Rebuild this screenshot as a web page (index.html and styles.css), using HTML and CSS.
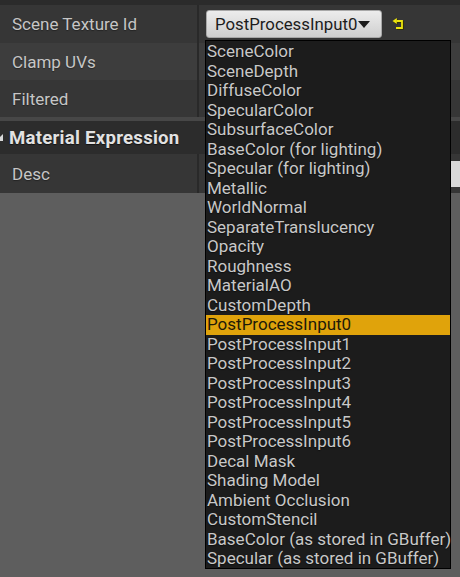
FILE: index.html
```html
<!DOCTYPE html>
<html>
<head>
<meta charset="utf-8">
<link rel="stylesheet" href="styles.css">
</head>
<body>
<div class="panel">
  <div class="topstrip"></div>
  <div class="row row-a">
    <div class="name">Scene Texture Id</div>
    <div class="value">
      <div class="combo">PostProcessInput0<span class="caret"></span></div>
      <svg class="reset" width="13" height="13" viewBox="0 0 13 13">
        <g transform="translate(0.8,0.8)" fill="none" stroke="#2f2f00" stroke-width="2">
          <path d="M4.5 3 H10 V10 H4"/>
        </g>
        <path d="M0.5 3 L4.8 0 V6 Z" fill="#2f2f00" transform="translate(0.8,0.8)"/>
        <path d="M4.5 3 H10 V10 H4" fill="none" stroke="#ece40e" stroke-width="1.8"/>
        <path d="M0.5 3 L4.8 0 V6 Z" fill="#ece40e"/>
      </svg>
    </div>
  </div>
  <div class="row row-b">
    <div class="name">Clamp UVs</div>
    <div class="value"></div>
  </div>
  <div class="row row-c">
    <div class="name">Filtered</div>
    <div class="value"></div>
  </div>
  <div class="sep"></div>
  <div class="header"><span class="arrow"></span>Material Expression</div>
  <div class="row row-d">
    <div class="name">Desc</div>
    <div class="value"><div class="textbox"></div></div>
  </div>
</div>
<div class="menu">
  <div class="item">SceneColor</div>
  <div class="item">SceneDepth</div>
  <div class="item">DiffuseColor</div>
  <div class="item">SpecularColor</div>
  <div class="item">SubsurfaceColor</div>
  <div class="item">BaseColor (for lighting)</div>
  <div class="item">Specular (for lighting)</div>
  <div class="item">Metallic</div>
  <div class="item">WorldNormal</div>
  <div class="item">SeparateTranslucency</div>
  <div class="item">Opacity</div>
  <div class="item">Roughness</div>
  <div class="item">MaterialAO</div>
  <div class="item">CustomDepth</div>
  <div class="item selected">PostProcessInput0</div>
  <div class="item">PostProcessInput1</div>
  <div class="item">PostProcessInput2</div>
  <div class="item">PostProcessInput3</div>
  <div class="item">PostProcessInput4</div>
  <div class="item">PostProcessInput5</div>
  <div class="item">PostProcessInput6</div>
  <div class="item">Decal Mask</div>
  <div class="item">Shading Model</div>
  <div class="item">Ambient Occlusion</div>
  <div class="item">CustomStencil</div>
  <div class="item">BaseColor (as stored in GBuffer)</div>
  <div class="item">Specular (as stored in GBuffer)</div>
</div>
</body>
</html>
```

FILE: styles.css
```css
html, body {
  margin: 0;
  padding: 0;
}
body {
  background: #5e5e5e;
  width: 460px;
  height: 577px;
  overflow: hidden;
  font-family: Roboto, "Noto Sans", sans-serif;
  font-size: 17px;
  color: #c6c6c6;
  position: relative;
}
.panel {
  display: flex;
  flex-direction: column;
}
.topstrip {
  height: 5px;
  background: #2b2b2b;
}
.row {
  display: grid;
  grid-template-columns: 199px 1fr;
  background: #363636;
}
.row-a { height: 38px; }
.row-b { height: 37px; background: #3d3d3d; }
.row-c { height: 37px; }
.row-d { height: 39px; }
.name {
  display: flex;
  align-items: center;
  padding-left: 12px;
  border-right: 2px solid #292929;
  text-shadow: 0 1px 1px rgba(0,0,0,0.35);
}
.value {
  display: flex;
  align-items: center;
  padding-left: 7px;
}
.combo {
  width: 176px;
  height: 28px;
  box-sizing: border-box;
  border-radius: 3px;
  background: linear-gradient(#ececec, #cfcfcf);
  border: 1px solid #a8a8a8;
  color: #1c1c1c;
  display: flex;
  align-items: center;
  padding-left: 8px;
  white-space: nowrap;
  font-size: 16.8px;
}
.caret {
  width: 0;
  height: 0;
  margin-left: 1px;
  border-left: 6px solid transparent;
  border-right: 6px solid transparent;
  border-top: 7px solid #1c1c1c;
}
.reset {
  margin-left: 10px;
}
.sep {
  height: 4px;
  background: #474747;
}
.header {
  height: 33px;
  background: #2c2c2c;
  display: flex;
  align-items: center;
  padding-left: 9px;
  font-weight: bold;
  font-size: 18.6px;
  letter-spacing: 0.25px;
  color: #e2e2e2;
  position: relative;
  text-shadow: 0 1px 1px rgba(0,0,0,0.6);
}
.arrow {
  position: absolute;
  left: -4px;
  top: 13px;
  width: 0;
  height: 0;
  border-left: 7px solid transparent;
  border-bottom: 7px solid #d8d8d8;
}
.textbox {
  width: 260px;
  height: 26px;
  background: #d8d8d8;
}
.menu {
  position: absolute;
  left: 205px;
  top: 40px;
  width: 246px;
  height: 529px;
  box-sizing: border-box;
  border: 1px solid #000;
  background: #1c1c1c;
  padding-top: 1px;
}
.item {
  height: 19.5px;
  line-height: 19.5px;
  padding-left: 1px;
  white-space: nowrap;
  color: #c8c8c8;
  text-shadow: 0 1px 1px rgba(0,0,0,0.5);
}
.item.selected {
  background: #e0a30b;
  color: #1e1a08;
  text-shadow: none;
}
```
